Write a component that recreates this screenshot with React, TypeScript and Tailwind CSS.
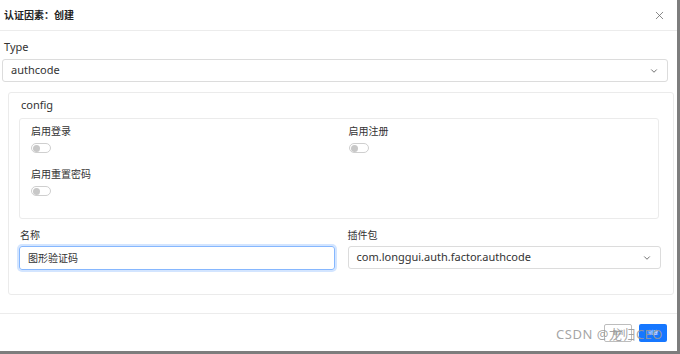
import { X, ChevronDown } from 'lucide-react';

function Toggle() {
  return (
    <div className="w-[20px] h-[10px] rounded-full border border-[#cfcfcf] bg-white flex items-center px-[1px]">
      <div className="w-[7px] h-[7px] rounded-full bg-[#c8c8c8]" />
    </div>
  );
}

function Switch({ label }: { label: string }) {
  return (
    <div className="flex flex-col gap-[6px]">
      <div className="text-[10px] text-[#333] leading-[12px] h-[12px]">{label}</div>
      <Toggle />
    </div>
  );
}

function SelectBox({ value, className }: { value: string; className?: string }) {
  return (
    <div
      className={`h-[23px] border border-[#dcdcdc] rounded-[3px] bg-white flex items-center justify-between pl-[8px] pr-[8px] text-[11px] text-[#333] ${className ?? ''}`}
    >
      <span>{value}</span>
      <ChevronDown size={10} strokeWidth={2} className="text-[#555]" />
    </div>
  );
}

export default function App() {
  return (
    <div
      className="w-[680px] h-[354px] bg-[#7d7d7d] overflow-hidden"
      style={{ fontFamily: '"Noto Sans", "Noto Sans CJK SC", sans-serif' }}
    >
      <div className="relative w-[677px] h-[351px] bg-white flex flex-col">
        {/* header */}
        <div className="h-[31px] flex items-center justify-between px-[4px] border-b border-[#ececec] shrink-0">
          <div className="text-[10px] font-bold text-[#222]">认证因素：创建</div>
          <X size={13} strokeWidth={1.4} className="text-[#666] mr-[7px]" />
        </div>

        {/* body */}
        <div className="flex-1 pl-[2px] pr-[9px] pt-[9px]">
          <div className="pl-[2px] text-[11px] text-[#333] leading-[14px]">Type</div>
          <SelectBox value="authcode" className="mt-[5px]" />

          <div className="mt-[10px] ml-[6px] mr-[-6px] border border-[#ebebeb] rounded-[3px] px-[10px] pt-[5px] pb-[24px]">
            <div className="text-[11px] text-[#333] leading-[14px] pl-[2px]">config</div>
            <div className="mt-[6px] mr-[4px] border border-[#ebebeb] rounded-[3px] h-[101px] pl-[11px] pt-[6px] grid grid-cols-2 content-start gap-y-[15px]">
              <Switch label="启用登录" />
              <div className="pl-[4px]">
                <Switch label="启用注册" />
              </div>
              <Switch label="启用重置密码" />
            </div>

            <div className="mt-[10px] grid grid-cols-2 gap-x-[13px]">
              <div className="flex flex-col">
                <div className="text-[10px] text-[#333] leading-[12px] h-[12px] pl-[1px]">名称</div>
                <div className="mt-[5px] h-[24px] border border-[#86b7fe] rounded-[3px] shadow-[0_0_0_2px_rgba(13,110,253,0.18)] flex items-center pl-[8px] text-[10px] text-[#333]">
                  图形验证码
                </div>
              </div>
              <div className="flex flex-col">
                <div className="text-[10px] text-[#333] leading-[12px] h-[12px]">插件包</div>
                <SelectBox value="com.longgui.auth.factor.authcode" className="mt-[5px] mr-[2px]" />
              </div>
            </div>
          </div>
        </div>

        {/* footer */}
        <div className="h-[38px] border-t border-[#ececec] flex items-center justify-end gap-[7px] pr-[10px] shrink-0">
          <div className="w-[28px] h-[18px] border border-[#bdbdbd] rounded-[2px] flex items-center justify-center text-[5px] text-[#666]">
            取消
          </div>
          <div className="w-[28px] h-[18px] bg-[#1677ff] rounded-[2px] flex items-center justify-center text-[5px] text-white">
            创建
          </div>
        </div>

        <div className="absolute right-[14px] bottom-[7px] text-[13px] text-[#9a9a9a]/90 tracking-[0.5px] pointer-events-none">
          CSDN @龙归CEO
        </div>
      </div>
    </div>
  );
}
